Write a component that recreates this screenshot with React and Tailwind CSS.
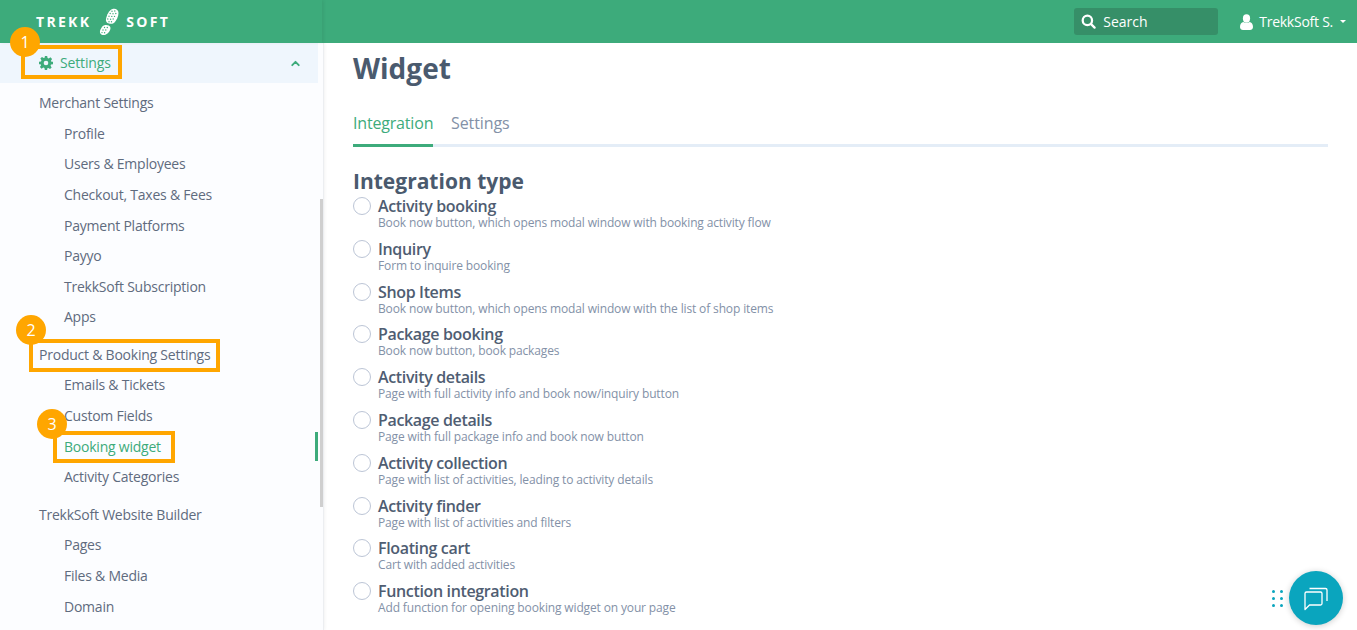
import { ChevronUp } from "lucide-react";

const merchantItems = ["Profile", "Users & Employees", "Checkout, Taxes & Fees", "Payment Platforms", "Payyo", "TrekkSoft Subscription", "Apps"];
const productItems = ["Emails & Tickets", "Custom Fields", "Booking widget", "Activity Categories"];
const builderItems = ["Pages", "Files & Media", "Domain"];

const integrations = [
  ["Activity booking", "Book now button, which opens modal window with booking activity flow"],
  ["Inquiry", "Form to inquire booking"],
  ["Shop Items", "Book now button, which opens modal window with the list of shop items"],
  ["Package booking", "Book now button, book packages"],
  ["Activity details", "Page with full activity info and book now/inquiry button"],
  ["Package details", "Page with full package info and book now button"],
  ["Activity collection", "Page with list of activities, leading to activity details"],
  ["Activity finder", "Page with list of activities and filters"],
  ["Floating cart", "Cart with added activities"],
  ["Function integration", "Add function for opening booking widget on your page"],
];

const BootLogo = () => (
  <svg width="22" height="28" viewBox="0 0 22 28" fill="white" className="block">
    {/* sole */}
    <path d="M14.500 1c3.500-.8 6 1 6 4 0 3.500-2 7-4 9.500-1.300 1.500-3.500 1.500-5.500 1-2.200-.6-3.500-2-3-4.500C8.800 7 11 2 14.500 1z" />
    <path d="M6.500 17.200c2.500-.6 5.200.4 5.800 1.800.6 1.800-.3 3.800-1.800 5.500-1.500 2-4.500 3.300-6.800 2.200-2-1-2.200-3.200-1.200-5.200.9-1.900 2.100-3.800 4-4.300z" />
    {/* tread holes */}
    <g fill="#3dab7b">
      <circle cx="14" cy="3.200" r=".7" /><circle cx="16.800" cy="3" r=".7" />
      <circle cx="12.200" cy="5.500" r=".7" /><circle cx="15" cy="5.700" r=".7" /><circle cx="17.800" cy="5.500" r=".7" />
      <circle cx="11" cy="8.200" r=".7" /><circle cx="13.800" cy="8.400" r=".7" /><circle cx="16.500" cy="8.400" r=".7" />
      <circle cx="9.800" cy="11" r=".7" /><circle cx="12.600" cy="11.200" r=".7" /><circle cx="15.200" cy="11" r=".7" />
      <circle cx="11" cy="13.700" r=".7" /><circle cx="13.500" cy="13.700" r=".7" />
      <circle cx="6.500" cy="19.500" r=".7" /><circle cx="9.300" cy="19.500" r=".7" />
      <circle cx="5" cy="22" r=".7" /><circle cx="7.800" cy="22" r=".7" />
      <circle cx="4" cy="24.600" r=".7" /><circle cx="6.600" cy="24.800" r=".7" />
    </g>
  </svg>
);

const Cog = () => (
  <svg width="14" height="14" viewBox="0 0 24 24" fill="#3dab7b">
    <path fillRule="evenodd" d="M10 0h4l.7 3.400 2 .8L19.600 2.300l2.800 2.800-1.900 2.900.8 2L24 10v4l-3.400.7-.8 2 1.900 2.900-2.800 2.800-2.900-1.900-2 .8L14 24h-4l-.7-3.400-2-.8-2.900 1.900-2.800-2.800 1.900-2.900-.8-2L0 14v-4l3.400-.7.8-2-1.900-2.900 2.800-2.800 2.900 1.900 2-.8zM12 8a4 4 0 100 8 4 4 0 000-8z" />
  </svg>
);

const Badge = ({ n, className }) => (
  <div className={`absolute w-[30px] h-[30px] rounded-full bg-[#ffa600] text-white text-[16px] leading-[30px] text-center z-20 ${className}`}>{n}</div>
);

const Group = ({ title, items }) => (
  <div className="mb-[6.500px]">
    <div className="h-[31px] pl-[39px] flex items-center text-[14px] tracking-[-0.23px] text-[#5f6b7e]">{title}</div>
    {items.map((item) => (
      <div key={item} className={`h-[30.600px] pl-[64px] flex items-center text-[14px] tracking-[-0.23px] ${item === "Booking widget" ? "text-[#3dab7b]" : "text-[#5f6b7e]"}`}>
        {item}
      </div>
    ))}
  </div>
);

export default function App() {
  return (
    <div className="relative w-[1357px] h-[630px] overflow-hidden bg-white font-['Open_Sans',sans-serif]">
      <header className="h-[43px] bg-[#3dab7b] flex items-center relative z-10">
        <div className="w-[322px] h-full flex items-center pl-[36px] shadow-[2px_0_3px_rgba(0,0,0,0.06)] text-white text-[14px] font-bold tracking-[2.300px]">
          <span>TREKK</span>
          <span className="ml-[7px] mr-[6px]"><BootLogo /></span>
          <span>SOFT</span>
        </div>
        <div className="ml-auto flex items-center pr-[11px]">
          <div className="w-[144px] h-[27px] rounded-[3px] bg-[#368f68] flex items-center pl-[7px] text-white text-[14px]">
            <svg width="15" height="15" viewBox="0 0 16 16" fill="none" stroke="white" strokeWidth="2.400" strokeLinecap="round">
              <circle cx="6.800" cy="6.800" r="5" />
              <path d="M10.500 10.500L14.500 14.500" />
            </svg>
            <span className="ml-[7px]">Search</span>
          </div>
          <div className="ml-[22px] flex items-center text-white text-[14px] tracking-[-0.25px]">
            <svg width="13" height="16" viewBox="0 0 13 16" fill="white">
              <ellipse cx="6.500" cy="4.500" rx="3.600" ry="4.200" />
              <path d="M0 13c0-3 1.500-4.700 3.300-5 1.800 1.300 4.600 1.300 6.400 0 1.800.3 3.300 2 3.300 5 0 2-1.400 3-3 3H3c-1.600 0-3-1-3-3z" />
            </svg>
            <span className="ml-[6px]">TrekkSoft S.</span>
            <span className="ml-[7px] w-0 h-0 border-x-[3px] border-x-transparent border-t-[3px] border-t-white" />
          </div>
        </div>
      </header>

      <div className="flex h-[587px]">
        <aside className="relative w-[324px] shrink-0 bg-[#fcfdff] border-r border-[#eceef1] shadow-[1px_0_3px_rgba(0,0,0,0.05)] overflow-hidden">
          <div className="w-[318px] h-[40px] bg-[#eff6fd] flex items-center pl-[39px] text-[14px] tracking-[-0.15px] text-[#3dab7b]">
            <Cog />
            <span className="ml-[7px] -translate-y-[1px]">Settings</span>
            <ChevronUp size={13} strokeWidth={3.500} className="ml-auto mr-[16px]" />
          </div>
          <div className="pt-[4px]">
            <Group title="Merchant Settings" items={merchantItems} />
            <Group title="Product & Booking Settings" items={productItems} />
            <Group title="TrekkSoft Website Builder" items={builderItems} />
          </div>
          {/* scrollbar and active marker */}
          <div className="absolute left-[320px] top-[156px] w-[3px] h-[308px] bg-[#cfcfcf]" />
          <div className="absolute left-[315px] top-[389px] w-[3px] h-[29px] bg-[#3dab7b]" />
        </aside>

        <main className="flex-1 pl-[29px] pr-[29px] min-w-0">
          <h1 className="text-[28px] leading-[50px] font-bold text-[#4a5a6e]">Widget</h1>
          <div className="mt-[10px] flex border-b-[3px] border-[#e4edf7] h-[44px]">
            <div className="w-[80px] h-[44px] border-b-[3px] border-[#3dab7b] text-[16px] tracking-[-0.18px] leading-[40px] text-[#3dab7b]">Integration</div>
            <div className="ml-[18px] text-[16px] tracking-[-0.1px] leading-[40px] text-[#8391a7]">Settings</div>
          </div>
          <h2 className="mt-[19px] text-[21px] leading-[30px] font-bold text-[#4a5a6e]">Integration type</h2>
          <div>
            {integrations.map(([name, desc]) => (
              <div key={name} className="flex h-[42.800px]">
                <span className="mt-[1px] w-[18px] h-[18px] rounded-full border border-[#bcc5d6] bg-white shrink-0" />
                <div className="ml-[7px]">
                  <div className="text-[16px] leading-[18px] font-semibold tracking-[-0.35px] text-[#4f5d72] mt-[1px]">{name}</div>
                  <div className="text-[12px] leading-[15px] text-[#8391a7] tracking-[-0.14px]">{desc}</div>
                </div>
              </div>
            ))}
          </div>
        </main>
      </div>

      {/* annotations */}
      <div className="absolute left-[21px] top-[45px] w-[101px] h-[34px] border-[4px] border-[#ffa600]" />
      <div className="absolute left-[29px] top-[339px] w-[191px] h-[33px] border-[4px] border-[#ffa600]" />
      <div className="absolute left-[53px] top-[431px] w-[122px] h-[32px] border-[4px] border-[#ffa600]" />
      <Badge n="1" className="left-[10px] top-[27px]" />
      <Badge n="2" className="left-[16px] top-[315px]" />
      <Badge n="3" className="left-[37px] top-[409px]" />

      {/* chat widget */}
      <div className="absolute left-[1272px] top-[590px] grid grid-cols-2 gap-x-[5px] gap-y-[4px]">
        {[0, 1, 2, 3, 4, 5].map((i) => (
          <span key={i} className="w-[3px] h-[3px] rounded-full bg-[#0aa5be]" />
        ))}
      </div>
      <div className="absolute left-[1289px] top-[571px] w-[54px] h-[54px] rounded-full bg-[#0aa5be] shadow-[0_1px_6px_rgba(0,0,0,0.2)] flex items-center justify-center">
        <svg width="26" height="26" viewBox="0 0 26 26" fill="none" stroke="white" strokeWidth="1.300" strokeLinejoin="round">
          <path d="M2 8.500a1.500 1.500 0 011.500-1.500h14a1.500 1.500 0 011.500 1.500v10a1.500 1.500 0 01-1.500 1.500H6.500L2 24.500z" />
          <path d="M6.500 3.500h16a1.500 1.500 0 011.500 1.500v11" />
        </svg>
      </div>
    </div>
  );
}
